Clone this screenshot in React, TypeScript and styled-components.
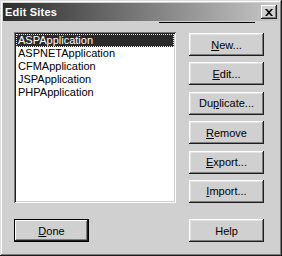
import styled, { createGlobalStyle } from "styled-components";

const GlobalStyle = createGlobalStyle`
    html, body {
        margin: 0;
        padding: 0;
        background: #d0d0d0;
    }
    body {
        font-family: "Liberation Sans", Arial, sans-serif;
        font-size: 11px;
    }
`

const Window = styled.div`
    width: 282px;
    height: 256px;
    box-sizing: border-box;
    padding: 3px;
    background: #d0d0d0;
    display: flex;
    flex-direction: column;
    box-shadow:
        inset -1px -1px #1e1e1e,
        inset 1px 1px #dcdcdc,
        inset -2px -2px #7c7c7c,
        inset 2px 2px #ffffff;
`

const TitleBar = styled.div`
    height: 18px;
    display: flex;
    align-items: center;
    justify-content: space-between;
    padding: 0 2px 0 2px;
    background: linear-gradient(to right, #2c2c2c, #c8c8c8);
`

const TitleText = styled.span`
    color: #ffffff;
    font-weight: bold;
    font-size: 11px;
    letter-spacing: 0.2px;
`

const CloseButton = styled.div`
    width: 16px;
    height: 14px;
    box-sizing: border-box;
    display: flex;
    align-items: center;
    justify-content: center;
    background: #d0d0d0;
    box-shadow:
        inset -1px -1px #1e1e1e,
        inset 1px 1px #ffffff,
        inset -2px -2px #7c7c7c;
`

const Rule = styled.div`
    height: 1px;
    width: 96px;
    margin: 1px 24px 0 auto;
    background: #000000;
`

const Body = styled.div`
    flex: 1;
    display: grid;
    grid-template-columns: 162px 75px;
    grid-template-rows: 171px 23px;
    column-gap: 13px;
    row-gap: 16px;
    padding: 9px 0 0 11px;
`

const ListBox = styled.div`
    background: #ffffff;
    padding: 2px;
    box-sizing: border-box;
    box-shadow:
        inset 1px 1px #7c7c7c,
        inset -1px -1px #ffffff,
        inset 2px 2px #1e1e1e,
        inset -2px -2px #d0d0d0;
`

const ListItem = styled.div<{ $selected?: boolean }>`
    height: 13px;
    line-height: 13px;
    padding-left: 2px;
    box-sizing: border-box;
    color: ${p => (p.$selected ? "#ffffff" : "#000000")};
    background: ${p => (p.$selected ? "#2a2a2a" : "transparent")};
    outline: ${p => (p.$selected ? "1px dotted #e8e8e8" : "none")};
    outline-offset: -1px;
    white-space: nowrap;
`

const ButtonColumn = styled.div`
    display: flex;
    flex-direction: column;
    justify-content: space-between;
    margin-top: 1px;
`

const Button = styled.div<{ $default?: boolean }>`
    height: 23px;
    width: 75px;
    box-sizing: border-box;
    display: flex;
    align-items: center;
    justify-content: center;
    color: #000000;
    background: #d0d0d0;
    border: ${p => (p.$default ? "1px solid #000000" : "none")};
    box-shadow: ${p =>
        p.$default
            ? "inset -1px -1px #1e1e1e, inset 1px 1px #ffffff, inset -2px -2px #7c7c7c"
            : "inset -1px -1px #1e1e1e, inset 1px 1px #ffffff, inset -2px -2px #7c7c7c, inset 2px 2px #e4e4e4"};

    u {
        text-decoration: underline;
        text-underline-offset: 1px;
    }
`

const sites = ["ASPApplication", "ASPNETApplication", "CFMApplication", "JSPApplication", "PHPApplication"];

const App = () => {
    return (
        <>
            <GlobalStyle />
            <Window>
                <TitleBar>
                    <TitleText>Edit Sites</TitleText>
                    <CloseButton>
                        <svg width="8" height="7" viewBox="0 0 8 7">
                            <path d="M0 0h2l2 2.2L6 0h2L5 3.5 8 7H6L4 4.8 2 7H0l3-3.5z" fill="#000" />
                        </svg>
                    </CloseButton>
                </TitleBar>
                <Rule />
                <Body>
                    <ListBox>
                        {sites.map((s, i) => (
                            <ListItem key={s} $selected={i === 0}>{s}</ListItem>
                        ))}
                    </ListBox>
                    <ButtonColumn>
                        <Button><span><u>N</u>ew...</span></Button>
                        <Button><span><u>E</u>dit...</span></Button>
                        <Button><span>Du<u>p</u>licate...</span></Button>
                        <Button><span><u>R</u>emove</span></Button>
                        <Button><span><u>E</u>xport...</span></Button>
                        <Button><span><u>I</u>mport...</span></Button>
                    </ButtonColumn>
                    <Button $default><span><u>D</u>one</span></Button>
                    <Button>Help</Button>
                </Body>
            </Window>
        </>
    )
}

export default App;
